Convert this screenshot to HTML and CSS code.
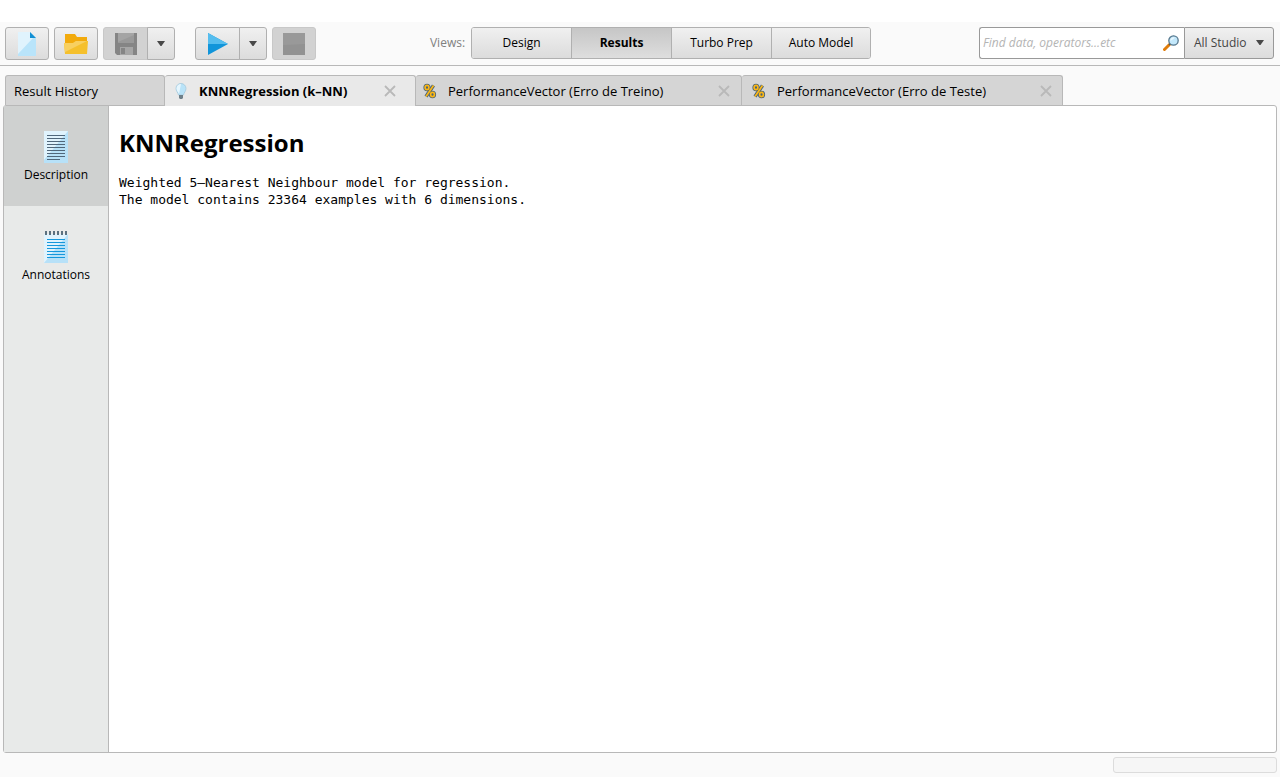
FILE: index.html
```html
<!DOCTYPE html>
<html lang="en">
<head>
<meta charset="utf-8">
<title>KNNRegression (k-NN) - Results</title>
<link rel="stylesheet" href="styles.css">
</head>
<body>
<svg class="defs" aria-hidden="true">
  <symbol id="i-percent" viewBox="0 0 14 16">
    <g fill="none" stroke="#4a6478" stroke-width="3.600"><ellipse cx="4" cy="4.500" rx="1.800" ry="2"/><ellipse cx="9.500" cy="11.500" rx="1.800" ry="2"/><path d="M10.500 2.500 3 13.500"/></g>
    <g fill="none" stroke="#fbb615" stroke-width="1.700"><ellipse cx="4" cy="4.500" rx="1.900" ry="2.200"/><ellipse cx="9.500" cy="11.500" rx="1.900" ry="2.200"/><path d="M10.500 2.500 3 13.500"/></g>
  </symbol>
  <symbol id="i-close" viewBox="0 0 12 12"><path d="M1 1 11 11M11 1 1 11" fill="none" stroke="#b9b9b9" stroke-width="1.800"/></symbol>
  <symbol id="i-arrow" viewBox="0 0 10 6"><path d="M1 0H9L5.500 5H4.500Z" fill="#484848"/></symbol>
</svg>
<header class="toolbar">
  <div class="tools">
    <button class="btn" aria-label="New process"><svg width="18" height="24" viewBox="0 0 18 24"><path d="M0 0H12L18 6V24H0Z" fill="#b9e4fa"/><path d="M0 0H12V6H15L0 22Z" fill="#e0f3fd"/><path d="M12 0 18 6H12Z" fill="#128fd3"/></svg></button>
    <button class="btn" aria-label="Open process"><svg width="24" height="20" viewBox="0 0 24 20"><path d="M1 0H11L13 3H23V19H1Z" fill="#f2aa0c"/><path d="M0 9H9L12 7H24L23 20H1Z" fill="#f5c02c"/><path d="M0 9H9L12 7H23L1 18Z" fill="#f8d060"/></svg></button>
    <div class="split">
      <button class="btn off" aria-label="Save process"><svg width="22" height="22" viewBox="0 0 22 22"><path d="M0 0H22V22H2L0 20Z" fill="#858585"/><path d="M3 0H19V10H3Z" fill="#a4a4a4"/><path d="M3 9 19 2V10H3Z" fill="#999"/><path d="M5 14H18V22H5Z" fill="#a6a6a6"/><path d="M6 15H10V21H6Z" fill="#858585"/></svg></button>
      <button class="btn drop" aria-label="Save options"><svg width="10" height="6"><use href="#i-arrow"/></svg></button>
    </div>
    <div class="split run">
      <button class="btn" aria-label="Run"><svg width="20" height="22" viewBox="0 0 20 22"><path d="M0 0 20 11 0 22Z" fill="#1195da"/><path d="M0 0 20 11H0Z" fill="#55bdee"/></svg></button>
      <button class="btn drop" aria-label="Run options"><svg width="10" height="6"><use href="#i-arrow"/></svg></button>
    </div>
    <button class="btn off" aria-label="Stop"><svg width="22" height="22"><path d="M0 0H22V22H0Z" fill="#929292"/><path d="M0 0H22V11L0 12Z" fill="#999"/></svg></button>
  </div>
  <nav class="views">
    <span class="views-label">Views:</span>
    <div class="switch">
      <button>Design</button><button class="on">Results</button><button>Turbo Prep</button><button>Auto Model</button>
    </div>
  </nav>
  <div class="search">
    <label class="field">
      <input type="text" aria-label="Search" placeholder="Find data, operators...etc">
      <svg width="16" height="16" viewBox="0 0 16 16"><path d="M1.500 14.500 6.500 9.500" stroke="#e07c0a" stroke-width="3" stroke-linecap="round"/><path d="M6 10 8 8" stroke="#555" stroke-width="1.500"/><circle cx="10.500" cy="5.500" r="4.700" fill="#c3e8fb" stroke="#55778d" stroke-width="1.300"/><path d="M7.500 6A3 3 0 0 1 12 2.800Z" fill="#e9f7fe"/></svg>
    </label>
    <button class="scope">All Studio <svg width="10" height="6"><use href="#i-arrow"/></svg></button>
  </div>
</header>
<main class="work">
  <div class="tabs" role="tablist">
    <div class="tab history" role="tab"><span class="name">Result History</span></div>
    <div class="tab model" role="tab" aria-selected="true"><svg class="bulb" width="12" height="16" viewBox="0 0 12 16"><path d="M6 .5A5 5 0 0 1 11 5.500C11 8 9 9.500 8.500 12H3.500C3 9.500 1 8 1 5.500A5 5 0 0 1 6 .5Z" fill="#b9e3f8" stroke="#a5c8da" stroke-width=".8"/><path d="M6 1A4.500 4.500 0 0 0 1.500 5.500C1.500 8 3.500 9 4 11Z" fill="#e6f6fe"/><path d="M4 12H8V15L7 16H5L4 15Z" fill="#6e7f89"/></svg><span class="name">KNNRegression (k–NN)</span><button class="close" aria-label="Close tab"><svg width="12" height="12"><use href="#i-close"/></svg></button></div>
    <div class="tab train" role="tab"><svg width="14" height="16"><use href="#i-percent"/></svg><span class="name">PerformanceVector (Erro de Treino)</span><button class="close" aria-label="Close tab"><svg width="12" height="12"><use href="#i-close"/></svg></button></div>
    <div class="tab test" role="tab"><svg width="14" height="16"><use href="#i-percent"/></svg><span class="name">PerformanceVector (Erro de Teste)</span><button class="close" aria-label="Close tab"><svg width="12" height="12"><use href="#i-close"/></svg></button></div>
  </div>
  <div class="panel">
    <nav class="side">
      <button class="on"><svg width="24" height="32" viewBox="0 0 24 32"><path d="M0 0H24V32H0Z" fill="#b7e1f8"/><path d="M0 0H24L0 29Z" fill="#e0f3fd"/><path d="M3 4.500H21M3 7.500H21M3 10.500H21M3 13.500H21M3 16.500H21M3 19.500H21M3 22.500H21M3 25.500H21M3 28.500H16" stroke="#50677b"/></svg>Description</button>
      <button><svg width="24" height="32" viewBox="0 0 24 32"><path d="M0 3H24V32H0Z" fill="#b7e1f8"/><path d="M0 3H24L0 32Z" fill="#e0f3fd"/><path d="M2 0V4M6 0V4M10 0V4M14 0V4M18 0V4M22 0V4" stroke="#5b7180" stroke-width="2"/><path d="M3 8.500H21M3 11.500H21M3 14.500H21M3 17.500H21M3 20.500H21M3 23.500H21M3 26.500H21" stroke="#1598dc"/></svg>Annotations</button>
    </nav>
    <section class="result">
      <h1>KNNRegression</h1>
      <pre>Weighted 5–Nearest Neighbour model for regression.
The model contains 23364 examples with 6 dimensions.</pre>
    </section>
  </div>
</main>
<footer class="status"><div class="progress" role="progressbar" aria-label="Progress"></div></footer>
</body>
</html>
```
FILE: styles.css
```css
* { box-sizing: border-box; }
body {
  margin: 0;
  min-height: 100vh;
  padding-top: 22px;
  display: flex;
  flex-direction: column;
  background: linear-gradient(#fff 22px, #fafafa 22px);
  color: #000;
  font: 12px/16px "Open Sans", "Noto Sans", sans-serif;
}
.defs { position: absolute; width: 0; height: 0; }
svg { display: block; flex: none; }
button { font: inherit; color: inherit; cursor: pointer; }

.toolbar {
  display: grid;
  grid-template-columns: 1fr auto 1fr;
  padding: 5px 6px 5px 5px;
  border-bottom: 1px solid #b8b8b8;
}
.tools { display: flex; gap: 5px; }
.split { display: flex; }
.run { margin-left: 15px; }
.btn {
  width: 44px;
  height: 33px;
  padding: 0;
  display: grid;
  place-items: center;
  border: 1px solid #b0b0b0;
  border-radius: 3px;
  background: linear-gradient(#f0f0f0, #dcdcdc);
}
.split .btn:first-child { width: 45px; border-radius: 3px 0 0 3px; }
.split .drop { width: 28px; margin-left: -1px; border-radius: 0 3px 3px 0; }
.btn.off { background: #d2d2d2; border-color: #c8c8c8; }

.views {
  display: flex;
  align-items: flex-start;
  gap: 6px;
  padding-left: 22px;
}
.views-label { color: #808080; line-height: 32px; }
.switch {
  display: flex;
  border: 1px solid #b0b0b0;
  border-radius: 3px;
  overflow: hidden;
}
.switch button {
  width: 100px;
  height: 30px;
  padding: 0;
  border: 0;
  border-left: 1px solid #b0b0b0;
  background: linear-gradient(#f0f0f0, #dcdcdc);
  font-weight: 500;
}
.switch button:first-child, .switch button:last-child { width: 99px; }
.switch button:first-child { border-left: 0; }
.switch .on { background: linear-gradient(#c6c6c6, #dedede); font-weight: 700; }

.search { display: flex; justify-self: end; align-items: flex-start; }
.field {
  width: 205px;
  height: 32px;
  padding: 0 5px 0 3px;
  display: flex;
  align-items: center;
  border: 1px solid #999;
  border-right: 0;
  border-radius: 3px 0 0 3px;
  background: #fff;
}
.field input {
  flex: 1;
  min-width: 0;
  padding: 0;
  border: 0;
  outline: 0;
  background: none;
  font: inherit;
  font-style: italic;
}
.field input::placeholder { color: #b4b4b4; opacity: 1; }
.scope {
  width: 90px;
  height: 32px;
  padding: 0 8px 0 9px;
  display: flex;
  align-items: center;
  justify-content: space-between;
  border: 1px solid #999;
  border-radius: 0 3px 3px 0;
  background: linear-gradient(#f0f0f0, #dcdcdc);
  color: #444;
  font-weight: 500;
  white-space: nowrap;
}

.work {
  flex: 1;
  display: flex;
  flex-direction: column;
  padding: 9px 3px 0;
}
.tabs { display: flex; padding-left: 2px; font-size: 13px; }
.tab {
  height: 30px;
  padding: 0 19px 0 8px;
  display: flex;
  align-items: center;
  border: 1px solid #b8b8b8;
  border-bottom: 0;
  border-left: 0;
  border-radius: 3px 3px 0 0;
  background: #d5d5d5;
  white-space: nowrap;
}
.tab .name { flex: 1; }
.tab svg + .name { margin-left: 11px; }
.tab .bulb + .name { margin-left: 12px; }
.history { width: 160px; border-left: 1px solid #b8b8b8; }
.model {
  width: 251px;
  height: 31px;
  margin-bottom: -1px;
  padding-left: 10px;
  position: relative;
  background: #e9e9e9;
  font-weight: 700;
}
.train { width: 326px; padding-left: 7px; padding-right: 11px; }
.test { width: 321px; padding-left: 10px; padding-right: 10px; }
.close { padding: 0; border: 0; background: none; }
.panel {
  flex: 1;
  display: flex;
  border: 1px solid #b8b8b8;
  border-radius: 3px;
  background: #fff;
}
.side {
  width: 105px;
  border-right: 1px solid #b8b8b8;
  background: #e8eae9;
}
.side button {
  width: 100%;
  height: 100px;
  padding: 2px 0 0;
  display: flex;
  flex-direction: column;
  align-items: center;
  justify-content: center;
  gap: 4px;
  border: 0;
  background: none;
  font-weight: 500;
}
.side .on { background: #cfd1d0; }
.result { flex: 1; padding: 21px 10px; }
h1 { margin: 0 0 15px; font-size: 24px; line-height: 32px; }
pre {
  margin: 0;
  font: 13px/17px "DejaVu Sans Mono", monospace;
}
.status {
  height: 24px;
  padding: 4px 3px;
  display: flex;
  justify-content: flex-end;
}
.progress {
  width: 164px;
  height: 16px;
  border: 1px solid #dcdcdc;
  border-radius: 3px;
  background: #f6f6f6;
}
```
